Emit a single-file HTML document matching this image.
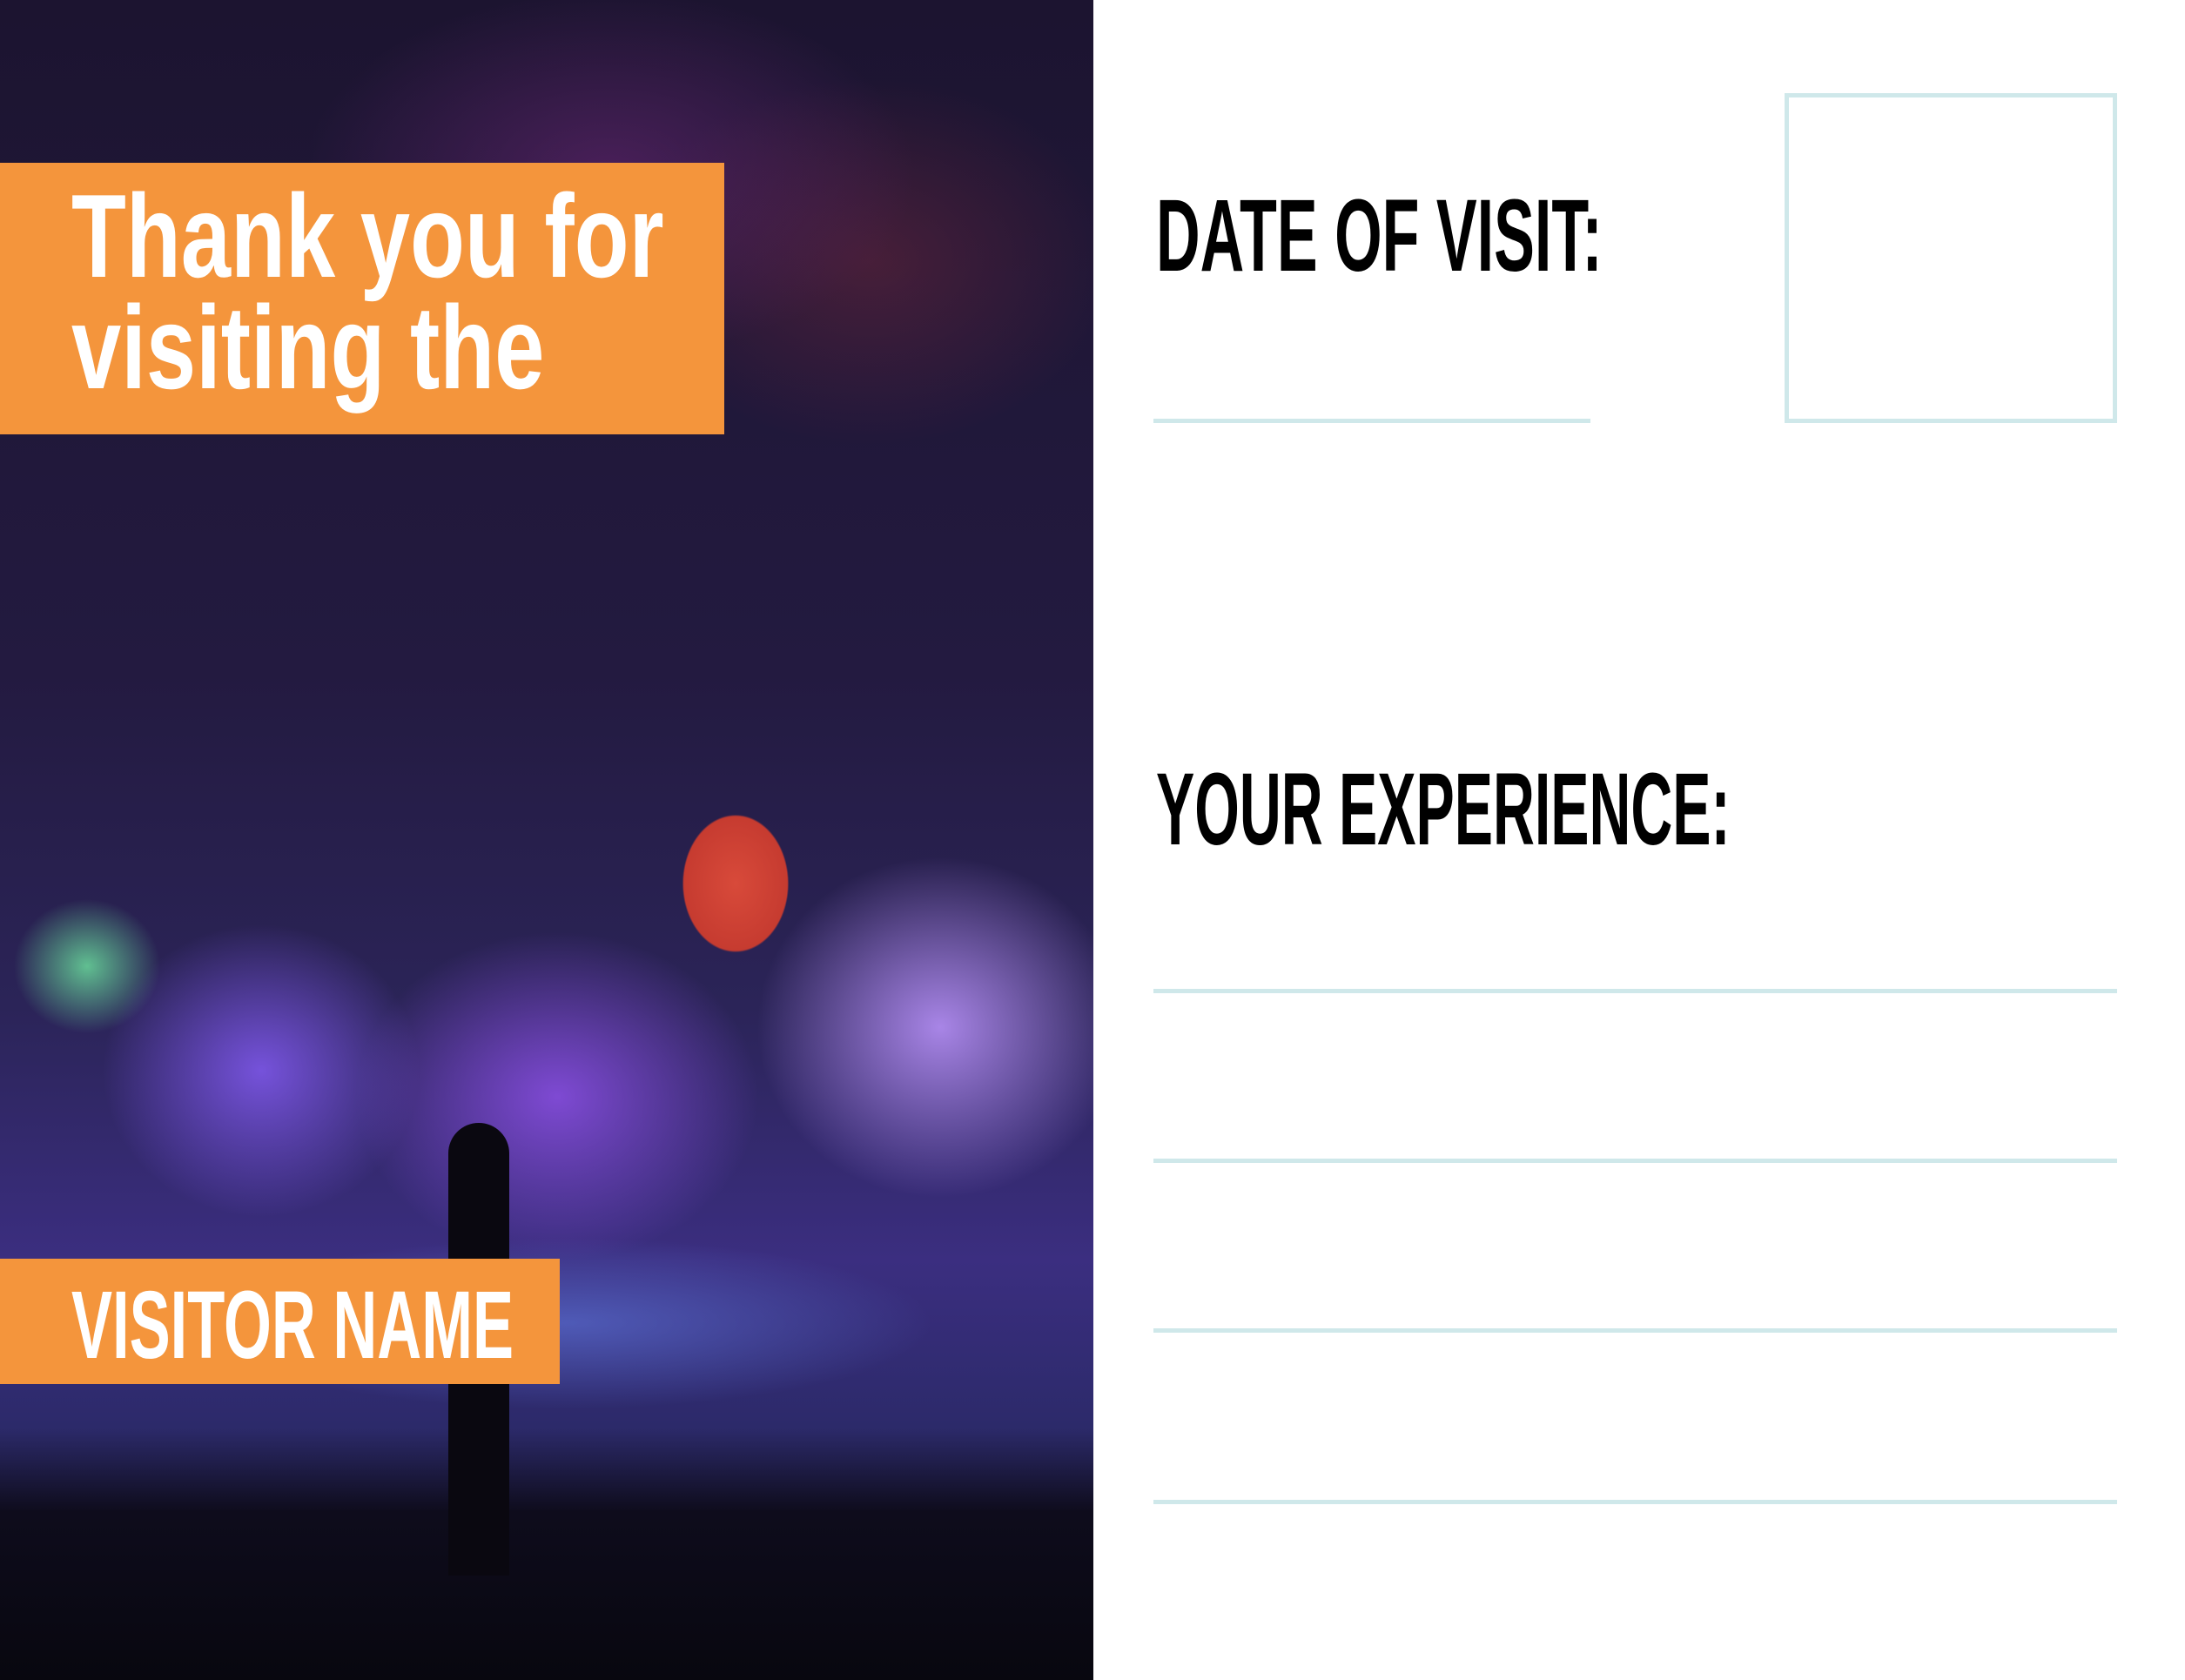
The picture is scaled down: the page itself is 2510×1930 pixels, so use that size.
<!DOCTYPE html>
<html><head><meta charset="utf-8"><style>
html,body{margin:0;padding:0;width:2510px;height:1930px;overflow:hidden;background:#fff;font-family:"Liberation Sans",sans-serif}
.photo{position:absolute;left:0;top:0;width:1256px;height:1930px;
background:
radial-gradient(ellipse 85px 110px at 845px 1015px,#d84a3a 0,#c63b30 70%,transparent 72%),
radial-gradient(ellipse 300px 280px at 1080px 1180px,rgba(190,150,255,.85),transparent 70%),
radial-gradient(ellipse 330px 270px at 640px 1260px,rgba(140,80,230,.85),transparent 70%),
radial-gradient(ellipse 260px 240px at 300px 1230px,rgba(130,90,240,.85),transparent 70%),
radial-gradient(ellipse 120px 110px at 100px 1110px,rgba(110,230,160,.8),transparent 70%),
radial-gradient(ellipse 600px 140px at 650px 1520px,rgba(90,110,210,.7),transparent 70%),
radial-gradient(ellipse 500px 300px at 700px 200px,rgba(110,40,120,.55),transparent 70%),
radial-gradient(ellipse 400px 300px at 1000px 300px,rgba(120,40,60,.45),transparent 70%),
linear-gradient(#1c1430 0,#231a40 40%,#2b2458 60%,#3b2e80 75%,#2c2a6a 85%,#0e0c1c 90%,#08070f 100%);}
.box{position:absolute;left:0;background:#f4953c;color:#fff}
.t{position:absolute;white-space:nowrap;transform-origin:0 0;line-height:1;font-weight:bold}
.blk{color:#000}
.ln{position:absolute;height:5px;background:#cfe8ea}
</style></head><body>
<div class="photo"></div>
<div style="position:absolute;left:515px;top:1290px;width:70px;height:520px;background:#0a0810;border-radius:35px 35px 0 0"></div>
<div class="box" style="top:187px;width:832px;height:312px">
 <div class="t" style="left:82px;top:20px;font-size:136px;line-height:128px;transform:scaleX(.757)">Thank you for<br>visiting the</div>
</div>
<div class="box" style="top:1446px;width:643px;height:144px">
 <div class="t" style="left:82px;top:22px;font-size:110px;transform:scaleX(.641)">VISITOR NAME</div>
</div>
<div class="t blk" style="left:1328px;top:212px;font-size:118px;transform:scaleX(.594)">DATE OF VISIT:</div>
<div class="ln" style="left:1325px;top:481px;width:502px"></div>
<div style="position:absolute;left:2050px;top:107px;width:372px;height:369px;border:5px solid #cfe8ea"></div>
<div class="t blk" style="left:1328px;top:871px;font-size:118px;transform:scaleX(.562)">YOUR EXPERIENCE:</div>
<div class="ln" style="left:1325px;top:1136px;width:1107px"></div>
<div class="ln" style="left:1325px;top:1331px;width:1107px"></div>
<div class="ln" style="left:1325px;top:1526px;width:1107px"></div>
<div class="ln" style="left:1325px;top:1723px;width:1107px"></div>
</body></html>
